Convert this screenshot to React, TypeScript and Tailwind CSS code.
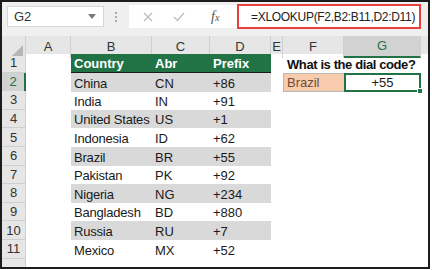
import React from "react";

const data = [
  ["China", "CN", "+86"],
  ["India", "IN", "+91"],
  ["United States", "US", "+1"],
  ["Indonesia", "ID", "+62"],
  ["Brazil", "BR", "+55"],
  ["Pakistan", "PK", "+92"],
  ["Nigeria", "NG", "+234"],
  ["Bangladesh", "BD", "+880"],
  ["Russia", "RU", "+7"],
  ["Mexico", "MX", "+52"],
];

const cols =
  "grid grid-cols-[24px_45px_81px_58px_61px_12px_61px_77px_1fr]";

const letters = ["A", "B", "C", "D", "E", "F", "G"];

function FormulaBar() {
  return (
    <div className="flex h-[34px] items-start bg-[#efefef] pt-[3px]">
      {/* name box */}
      <div className="ml-[5px] mt-[1px] flex h-[21px] w-[97px] items-center justify-between border border-[#d6d6d6] bg-white pl-[6px] pr-[7px]">
        <span className="text-[13px] text-[#333]">G2</span>
        <svg width="8" height="5" viewBox="0 0 8 5">
          <path d="M0 0 L8 0 L4 5 Z" fill="#7a7a7a" />
        </svg>
      </div>
      {/* dots */}
      <div className="mx-[11px] mt-[7px] flex flex-col gap-[2px]">
        <div className="h-[2px] w-[2px] bg-[#a8a8a8]" />
        <div className="h-[2px] w-[2px] bg-[#a8a8a8]" />
        <div className="h-[2px] w-[2px] bg-[#a8a8a8]" />
      </div>
      {/* formula area */}
      <div className="ml-[1px] flex h-[23px] flex-1 items-center bg-white">
        <div className="flex w-[108px] items-center">
          <svg width="10" height="10" viewBox="0 0 10 10" className="ml-[14px]">
            <path d="M1 1 L9 9 M9 1 L1 9" stroke="#bdbdbd" strokeWidth="1.3" />
          </svg>
          <svg width="12" height="10" viewBox="0 0 12 10" className="ml-[20px]">
            <path d="M1 5 L4.5 8.5 L11 1" stroke="#bdbdbd" strokeWidth="1.4" fill="none" />
          </svg>
          <span className="ml-[26px] font-['Liberation_Serif',serif] text-[14px] italic text-[#555]">
            f<span className="text-[10px]">x</span>
          </span>
        </div>
        <div className="flex h-[25px] w-[184px] items-center border-[2.5px] border-[#e8413b] bg-white pl-[12px]">
          <span className="whitespace-nowrap text-[12px] tracking-[-0.3px] text-[#222]">
            =XLOOKUP(F2,B2:B11,D2:D11)
          </span>
        </div>
      </div>
      <div className="w-[7px]" />
    </div>
  );
}

function HeaderRow() {
  return (
    <div className={`${cols} h-[18px] bg-[#e6e6e6] text-[13px] text-[#333]`}>
      <div className="relative border-r border-[#cfcfcf]">
        <svg width="11" height="11" viewBox="0 0 11 11" className="absolute bottom-[2px] right-[2px]">
          <path d="M11 0 L11 11 L0 11 Z" fill="#b7b7b7" />
        </svg>
      </div>
      {letters.map((l) => {
        const sel = l === "G";
        return (
          <div
            key={l}
            className={
              sel
                ? "flex items-center justify-center border-b-2 border-r border-b-[#217346] border-r-[#cfcfcf] bg-[#d2d2d2] text-[#217346]"
                : "flex items-center justify-center border-r border-[#cfcfcf]"
            }
          >
            {l}
          </div>
        );
      })}
      <div />
    </div>
  );
}

function Row({ n }: { n: number }) {
  const rec = n >= 2 && n <= 11 ? data[n - 2] : null;
  const stripe = n % 2 === 0 && rec;
  const selRow = n === 2;
  return (
    <div className={`${cols} h-[18.6px] text-[13px] leading-[15px] text-[#1a1a1a]`}>
      <div
        className={
          selRow
            ? "flex items-center justify-center border-b border-r-2 border-b-[#cfcfcf] border-r-[#217346] bg-[#d2d2d2] text-[#217346]"
            : "flex items-center justify-center border-b border-r border-[#cfcfcf] bg-[#e6e6e6] text-[#333]"
        }
      >
        {n}
      </div>
      <div />
      {n === 1 ? (
        <>
          {["Country", "Abr", "Prefix"].map((h) => (
            <div
              key={h}
              className="flex items-end border-b-[1.5px] border-[#1b1b1b] bg-[#217346] pb-[1px] pl-[3px] font-bold text-white"
            >
              {h}
            </div>
          ))}
        </>
      ) : (
        <>
          {[0, 1, 2].map((i) => (
            <div
              key={i}
              className={`flex items-end whitespace-nowrap pb-[1px] pl-[3px] ${i === 0 ? "tracking-[-0.2px]" : ""} ${stripe ? "bg-[#d9d9d9]" : ""}`}
            >
              {rec ? rec[i] : ""}
            </div>
          ))}
        </>
      )}
      <div />
      {n === 1 ? (
        <div className="relative flex items-end pb-[1px] pl-[4px]">
          <span className="whitespace-nowrap font-bold tracking-[-0.4px] text-[#111]">
            What is the dial code?
          </span>
        </div>
      ) : n === 2 ? (
        <div className="flex items-end border border-r-0 border-[#b8b8b8] bg-[#f8cbad] pb-[1px] pl-[3px] text-[#6b4f3c]">
          Brazil
        </div>
      ) : (
        <div />
      )}
      {n === 2 ? (
        <div className="relative flex items-end justify-center border-2 border-[#217346] bg-white">
          +55
          <div className="absolute -bottom-[4px] -right-[4px] h-[6px] w-[6px] border border-white bg-[#217346]" />
        </div>
      ) : (
        <div />
      )}
      <div />
    </div>
  );
}

export default function App() {
  return (
    <div className="h-[270px] w-[432px] bg-white font-['Liberation_Sans',Arial,sans-serif]">
      <div className="h-[269px] w-[430px] overflow-hidden border-2 border-[#1c1c1c]">
        <FormulaBar />
        <HeaderRow />
        {Array.from({ length: 11 }, (_, i) => (
          <Row key={i} n={i + 1} />
        ))}
        <div className={`${cols} h-[18.6px]`}>
          <div className="border-r border-[#cfcfcf] bg-[#e6e6e6]" />
        </div>
      </div>
    </div>
  );
}
